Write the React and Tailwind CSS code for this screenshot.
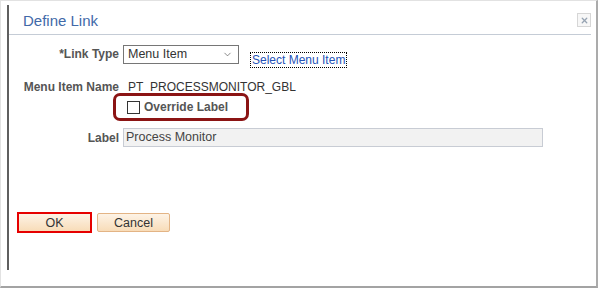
import React from 'react';
import { X, ChevronDown } from 'lucide-react';

// --- fila con etiqueta alineada a la derecha ---
const FieldRow = ({ label, className = '', children }) => (
    <div className={`flex items-center ${className}`}>
        <div className="w-[110px] text-right font-bold text-[12px] text-[#555]">{label}</div>
        {children}
    </div>
);

export default function App() {
    return (
        <div className="w-[599px] h-[289px] bg-white font-['Liberation_Sans',Arial,sans-serif]">
            <div className="w-[598px] h-[288px] border-t border-l border-[#e2e2e2] border-r-2 border-b-2 border-r-[#ababab] border-b-[#a3a3a3]">
                <div className="ml-[6px] mt-[4px] h-[265px] w-[584px] border-l-2 border-[#5f5f5f] flex flex-col">
                    {/* header */}
                    <div className="h-[30px] flex items-start justify-between border-b border-[#c5ccd6]">
                        <h1 className="pl-[14px] pt-[7px] text-[15px] leading-[18px] text-[#4169a8]">Define Link</h1>
                        <button className="mt-[8px] w-[14px] h-[14px] flex items-center justify-center border border-[#d6d6d6] bg-[#f7f7f7]">
                            <X size={9} strokeWidth={3.5} color="#96a3b2" />
                        </button>
                    </div>

                    {/* formulario */}
                    <FieldRow label="*Link Type" className="mt-[10px] items-start">
                        <div className="ml-[4px] w-[116px] h-[19px] border border-[#767676] flex items-center justify-between pl-[4px] pr-[5px] text-[12.5px] text-[#333]">
                            <span>Menu Item</span>
                            <ChevronDown size={11} strokeWidth={1.5} color="#555" />
                        </div>
                        <a className="ml-[11px] mt-[7px] h-[16px] px-[1px] border border-dotted border-black text-[12px] leading-[14px] text-[#2553b8]">
                            Select Menu Item
                        </a>
                    </FieldRow>

                    <FieldRow label="Menu Item Name" className="mt-[11px] h-[16px]">
                        <span className="ml-[9px] text-[12px] text-[#333]">PT_PROCESSMONITOR_GBL</span>
                    </FieldRow>

                    <div className="-mt-[2px] ml-[104px] w-[136px] h-[28px] border-[3px] border-[#8b1414] rounded-[7px] flex items-center pl-[11px]">
                        <span className="w-[13px] h-[13px] border border-[#333] bg-white" />
                        <span className="ml-[4px] font-bold text-[12px] text-[#555]">Override Label</span>
                    </div>

                    <FieldRow label="Label" className="mt-[7px]">
                        <div className="ml-[4px] w-[420px] h-[19px] border border-[#c8ccd4] bg-[#f2f2f2] flex items-center pl-[2px] text-[12.5px] text-[#444]">
                            Process Monitor
                        </div>
                    </FieldRow>

                    {/* botones */}
                    <div className="mt-[65px] ml-[8px] flex items-center">
                        <button className="w-[75px] h-[21px] border-2 border-[#e60000] bg-linear-to-b from-[#fdf3e6] to-[#f8dcb8] text-[12.5px] text-[#333]">
                            OK
                        </button>
                        <button className="ml-[5px] w-[73px] h-[19px] border border-[#e3b485] rounded-[2px] bg-linear-to-b from-[#fdf3e6] to-[#f8dcb8] text-[12.5px] text-[#333]">
                            Cancel
                        </button>
                    </div>
                </div>
            </div>
        </div>
    );
}
